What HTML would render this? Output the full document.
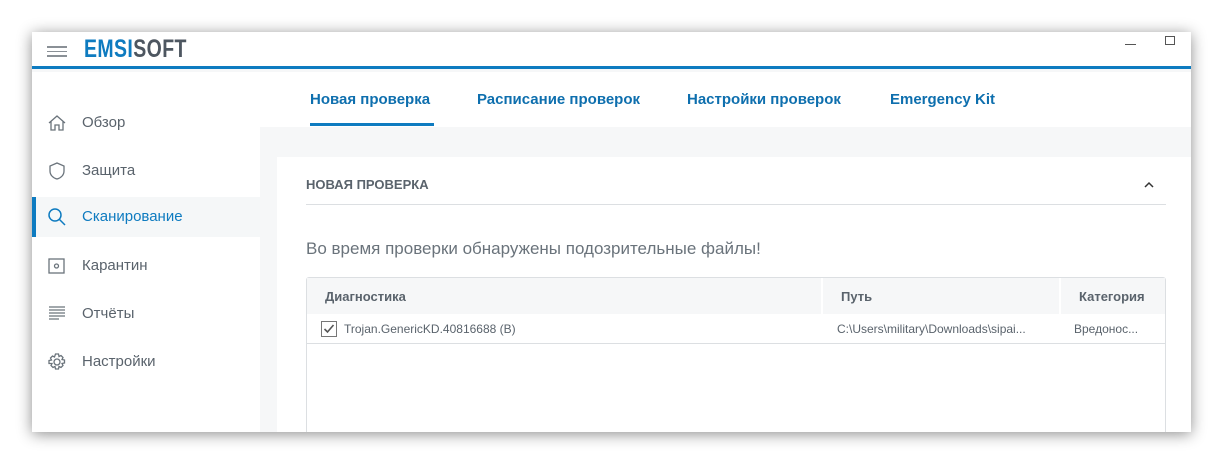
<!DOCTYPE html>
<html><head><meta charset="utf-8"><style>
*{margin:0;padding:0;box-sizing:border-box}
body{width:1223px;height:464px;background:#fff;font-family:"Liberation Sans","DejaVu Sans",sans-serif;position:relative;overflow:hidden}
.win{position:absolute;left:32px;top:32px;width:1159px;height:400px;background:#f6f7f8;box-shadow:0 2px 14px rgba(0,0,0,.45);overflow:hidden}
.title{position:absolute;left:0;top:0;width:100%;height:37px;background:#fff;border-bottom:3px solid #0e7bc0}
.logo{position:absolute;left:52px;top:3px;font-size:25px;font-weight:bold;letter-spacing:.5px;color:#0e7bc0;transform:scaleX(.78);transform-origin:left}
.logo span{color:#4d5660}
.ham{position:absolute;left:15px;top:14px;width:20px}
.ham i{display:block;height:1.5px;background:#8a9096;margin-bottom:3px}
.side{position:absolute;left:0;top:40px;width:228px;height:360px;background:#fff}
.item{position:absolute;left:0;width:228px;height:40px;font-size:15px;color:#5a636c}
.item .t{position:absolute;left:50px;top:11px}
.item svg{position:absolute;left:15px;top:10px}
.act{background:#f5f7f8;color:#0e7bc0;border-left:4px solid #0e7bc0}
.tabs{position:absolute;left:228px;top:40px;width:931px;height:55px;background:#fff;font-size:15px;color:#0e6fae;font-weight:bold}
.tabs span{position:absolute;top:19px}
.panel{position:absolute;left:245px;top:125px;width:914px;height:280px;background:#fff}
.h{position:absolute;left:29px;top:20px;font-size:13px;font-weight:bold;color:#5a636c}
.hl{position:absolute;left:29px;top:47px;width:860px;height:1px;background:#dcdfe2}
.msg{position:absolute;left:29px;top:82px;font-size:17px;color:#6a737b}
.tbl{position:absolute;left:29px;top:120px;width:860px;height:200px;border:1px solid #dcdfe2;border-radius:3px}
.th{position:absolute;top:0;height:36px;background:#f6f7f8;font-size:13px;font-weight:bold;color:#5a636c;padding:11px 0 0 18px}
.row{position:absolute;top:36px;left:0;width:858px;height:30px;border-bottom:1px solid #dcdfe2;font-size:12px;color:#5a636c}
.row span{position:absolute;top:8px}
</style></head><body>
<div class="win">
<div class="title">
<div class="ham"><i></i><i></i><i></i></div>
<div class="logo">EMSI<span>SOFT</span></div>
<div style="position:absolute;left:1093px;top:12px;width:11px;height:1px;background:#555"></div>
<div style="position:absolute;left:1133px;top:4px;width:10px;height:9px;border:1px solid #555"></div>
</div>
<div class="side">
<div class="item" style="top:31px"><svg width="20" height="20" fill="none" stroke="#6a737b" stroke-width="1.3"><path d="M2 10L10 3l8 7M4 8v9h4v-5h4v5h4V8"/></svg><span class="t">Обзор</span></div>
<div class="item" style="top:79px"><svg width="20" height="20" fill="none" stroke="#6a737b" stroke-width="1.3"><path d="M10 2l7 3v5c0 4-3 7-7 8-4-1-7-4-7-8V5z"/></svg><span class="t">Защита</span></div>
<div class="item act" style="top:125px"><svg width="20" height="20" fill="none" stroke="#0e7bc0" stroke-width="1.5" style="left:11px"><circle cx="8" cy="8" r="6"/><path d="M12.5 12.5L18 18"/></svg><span class="t" style="left:46px">Сканирование</span></div>
<div class="item" style="top:174px"><svg width="20" height="20" fill="none" stroke="#6a737b" stroke-width="1.3"><rect x="2" y="3" width="15" height="14"/><circle cx="9.5" cy="10" r="2"/></svg><span class="t">Карантин</span></div>
<div class="item" style="top:222px"><svg width="20" height="20" fill="none" stroke="#6a737b" stroke-width="1.2"><path d="M2 3h16M2 6h16M2 9h16M2 12h16M2 15h10"/></svg><span class="t">Отчёты</span></div>
<div class="item" style="top:270px"><svg width="20" height="20" fill="none" stroke="#6a737b" stroke-width="1.3"><circle cx="10" cy="10" r="3"/><path d="M8.5 2h3l.5 2.5 2-1 2 2-1 2 2.5.5v3l-2.5.5 1 2-2 2-2-1-.5 2.5h-3l-.5-2.5-2 1-2-2 1-2L2 11.5v-3l2.5-.5-1-2 2-2 2 1z"/></svg><span class="t">Настройки</span></div>
</div>
<div class="tabs">
<span style="left:50px">Новая проверка</span>
<div style="position:absolute;left:50px;top:51px;width:124px;height:3px;background:#0e7bc0"></div>
<span style="left:217px">Расписание проверок</span>
<span style="left:427px">Настройки проверок</span>
<span style="left:630px">Emergency Kit</span>
</div>
<div class="panel">
<div class="h">НОВАЯ ПРОВЕРКА</div>
<svg style="position:absolute;left:866px;top:24px" width="12" height="8" fill="none" stroke="#333" stroke-width="1.5"><path d="M2 6l4-4 4 4"/></svg>
<div class="hl"></div>
<div class="msg">Во время проверки обнаружены подозрительные файлы!</div>
<div class="tbl">
<div class="th" style="left:0;width:514px">Диагностика</div>
<div class="th" style="left:516px;width:236px">Путь</div>
<div class="th" style="left:754px;width:104px">Категория</div>
<div class="row">
<svg style="position:absolute;left:14px;top:7px" width="16" height="16"><rect x=".5" y=".5" width="15" height="15" fill="#fff" stroke="#777"/><path d="M3.5 8l3 3 6-7" fill="none" stroke="#555" stroke-width="1.6"/></svg>
<span style="left:37px">Trojan.GenericKD.40816688 (B)</span>
<span style="left:530px">C:\Users\military\Downloads\sipai...</span>
<span style="left:767px">Вредонос...</span>
</div>
</div>
</div>
</div>
</body></html>
